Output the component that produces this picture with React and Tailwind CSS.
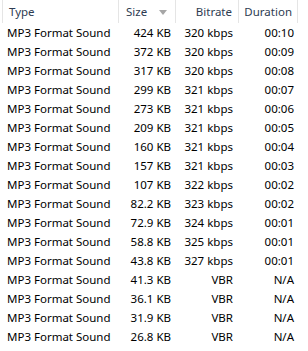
const rows = [
  ['424 KB', '320 kbps', '00:10'],
  ['372 KB', '320 kbps', '00:09'],
  ['317 KB', '320 kbps', '00:08'],
  ['299 KB', '321 kbps', '00:07'],
  ['273 KB', '321 kbps', '00:06'],
  ['209 KB', '321 kbps', '00:05'],
  ['160 KB', '321 kbps', '00:04'],
  ['157 KB', '321 kbps', '00:03'],
  ['107 KB', '322 kbps', '00:02'],
  ['82.2 KB', '323 kbps', '00:02'],
  ['72.9 KB', '324 kbps', '00:01'],
  ['58.8 KB', '325 kbps', '00:01'],
  ['43.8 KB', '327 kbps', '00:01'],
  ['41.3 KB', 'VBR', 'N/A'],
  ['36.1 KB', 'VBR', 'N/A'],
  ['31.9 KB', 'VBR', 'N/A'],
  ['26.8 KB', 'VBR', 'N/A'],
];

export default function App() {
  return (
    <div className="w-[308px] h-[351px] overflow-hidden bg-white text-[11.5px] leading-none text-black font-['Noto_Sans',sans-serif]">
      {/* column headers */}
      <div className="flex h-[23px] pl-[2px] text-[#2e3c52]">
        <div className="w-[117px] border-l border-r border-[#e5e5e5] flex items-center pl-[6px]">Type</div>
        <div className="w-[57px] border-r border-[#e5e5e5] flex items-center pl-[7px]">
          <span>Size</span>
          <svg width="8" height="5" viewBox="0 0 8 5" className="ml-[12px] mt-[1px]">
            <path d="M0 0 H8 L4 5 Z" fill="#a6a6a6" />
          </svg>
        </div>
        <div className="w-[63px] border-r border-[#e5e5e5] flex items-center justify-end pr-[6px]">Bitrate</div>
        <div className="w-[59px] border-r border-[#e5e5e5] flex items-center justify-end pr-[5px]">Duration</div>
      </div>

      {/* file rows */}
      {rows.map(([size, bitrate, duration], i) => (
        <div key={i} className="flex h-[19px] items-center">
          <div className="w-[120px] pl-[7px] whitespace-nowrap">MP3 Format Sound</div>
          <div className="w-[57px] text-right pr-[6px]">{size}</div>
          <div className="w-[63px] text-right pr-[7px]">{bitrate}</div>
          <div className="w-[60px] text-right pr-[6px]">{duration}</div>
        </div>
      ))}
    </div>
  );
}
